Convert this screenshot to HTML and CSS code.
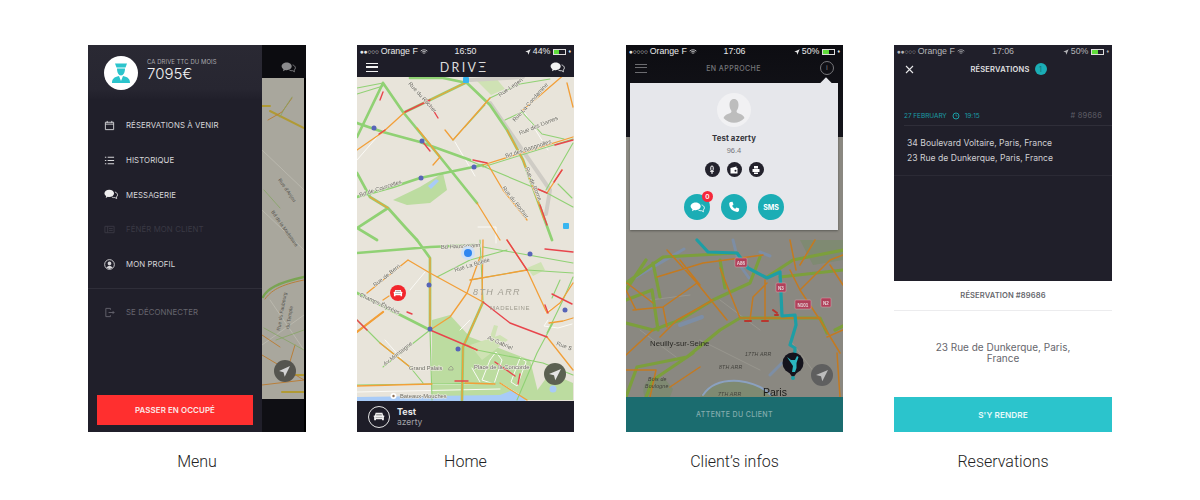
FILE: index.html
```html
<!DOCTYPE html>
<html lang="fr">
<head>
<meta charset="utf-8">
<title>Drive – screens</title>
<link rel="stylesheet" href="styles.css">
</head>
<body>
<svg class="defs" width="0" height="0">
  <defs>
    <symbol id="chat" viewBox="0 0 16 12"><path d="M6 .5c3 0 5.500 1.800 5.500 4.200S9 8.900 6 8.900c-.6 0-1.100 0-1.600-.2L2 10l.5-2.200C1.200 7 .5 5.900.5 4.700.5 2.300 3 .5 6 .5z" fill="currentColor"/><path d="M12.500 3.200c1.800.5 3 1.700 3 3.200 0 1-.5 1.800-1.300 2.400l.3 1.900-2-1.200c-1.200.2-2.500 0-3.500-.6" fill="none" stroke="currentColor" stroke-width=".9"/></symbol>
    <symbol id="loc" viewBox="0 0 10 10"><path d="M9.500.5 5.500 9.500 4.500 5.500.5 4.500z" fill="currentColor"/></symbol>
    <symbol id="car" viewBox="0 0 16 12"><path d="M3.500 1h9l1 3.500h1.500v2h-.5V11h-2.500V9.500h-8V11H1.500V6.500H1v-2h1.500z" fill="currentColor"/><path d="M4.500 2.500h7l.5 2H4zM3.500 6.500h9v1h-9z" fill="#00000055"/></symbol>
  </defs>
</svg>
<main class="board">

  <figure class="shot">
    <div class="phone phone-menu">
      <nav class="drawer">
        <header class="drawer-head">
          <svg class="avatar" viewBox="0 0 34 34"><circle cx="17" cy="17" r="17" fill="#fff"/><path d="M11 7.500h12l-1.500 4h-9zM13 12.500h8c0 4-1.500 7-4 7s-4-3-4-7zM8 27c0-4 2-6 7-7l2 5 2-5c5 1 7 3 7 7z" fill="#2bc4cc"/></svg>
          <div class="earn">
            <span class="earn-label">CA DRIVE TTC DU MOIS</span>
            <strong class="earn-value">7095€</strong>
          </div>
        </header>
        <ul class="menu">
          <li class="menu-item"><svg class="mi" viewBox="0 0 12 12"><path d="M1.500 2.500h9v8h-9zM1.500 4.500h9M3.500 1v2M8.500 1v2" fill="none" stroke="currentColor"/></svg>RÉSERVATIONS À VENIR</li>
          <li class="menu-item"><svg class="mi" viewBox="0 0 12 12"><path d="M1 2.500h1.500M4 2.500h7M1 6h1.500M4 6h7M1 9.500h1.500M4 9.500h7" fill="none" stroke="currentColor" stroke-width="1.200"/></svg>HISTORIQUE</li>
          <li class="menu-item"><svg class="mi mi-chat"><use href="#chat"/></svg>MESSAGERIE</li>
          <li class="menu-item is-off"><svg class="mi" viewBox="0 0 12 12"><path d="M1 2.500h10v7H1zM4 2.500v7M5.500 5h4M5.500 7h4" fill="none" stroke="currentColor"/></svg>FÉNÉR MON CLIENT</li>
          <li class="menu-item"><svg class="mi" viewBox="0 0 12 12"><circle cx="6" cy="6" r="5.300" fill="none" stroke="currentColor"/><path d="M6 2.800c1.200 0 2 .9 2 2.200S7.200 7 6 7 4 6.300 4 5s.8-2.200 2-2.200zM2.800 9.500C3.200 8.200 4.500 7.600 6 7.600s2.800.6 3.200 1.900L6 11z" fill="currentColor"/></svg>MON PROFIL</li>
        </ul>
        <div class="menu-sep"></div>
        <div class="menu-item is-dim"><svg class="mi" viewBox="0 0 12 12"><path d="M7 3V1.500H2v9h5V9M5 6h6M9.500 4.500 11 6 9.500 7.500" fill="none" stroke="currentColor"/></svg>SE DÉCONNECTER</div>
        <button class="busy-btn">PASSER EN OCCUPÉ</button>
      </nav>
      <div class="peek">
        <div class="peek-top"><svg class="peek-chat"><use href="#chat"/></svg></div>
        <svg class="peek-map" viewBox="262 78 42 321" width="42" height="321">
          <rect x="262" y="78" width="42" height="321" fill="#a9a79d"/>
          <g class="rd-thin-w">
            <path d="M262 150 304 190M262 210l42 40M270 300l34 50M262 345l42-30"/>
          </g>
          <path class="dk-y" d="M270 111l34 17M262 106h8M286 375h18M282 392h22"/>
          <path class="dk-o" d="M268 120l14-8 10-14M262 355l42 25M262 335l18 12M262 385l42-5M295 345l-6 20"/>
          <path class="dk-gt" d="M280 117c4-8 8-14 12-20M264 190l16 18M264 328l40 22M276 340l28-10"/>
          <path class="dk-g" d="M263 297c4-8 14-14 41-20"/>
          <path class="dk-o" d="M265 299c6-8 14-14 39-19"/>
          <g class="lbl-dk">
            <text x="278" y="180" transform="rotate(55 278 180)">Rue d'Anjou</text>
            <text x="271" y="212" transform="rotate(55 271 212)">Bd de la Madeleine</text>
            <text x="280" y="331" transform="rotate(-80 280 331)">Rue du Faubourg</text>
            <text x="289" y="329" transform="rotate(-80 289 329)">du Temple</text>
          </g>
          <circle cx="285" cy="371" r="11" fill="#55554f"/>
          <path d="M290 366l-11 5 4.500 1.200 1.200 4.500z" fill="#d4d4d4"/>
        </svg>
        <div class="peek-bottom"></div>
      </div>
    </div>
    <figcaption class="caption">Menu</figcaption>
  </figure>

  <figure class="shot">
    <div class="phone phone-home">
      <header class="topbar">
        <div class="status">
          <span class="st-left"><i class="dots">●●○○○</i> Orange F <svg class="wifi" viewBox="0 0 10 8"><path d="M.5 2.800a6.500 6.500 0 0 1 9 0M2 4.300a4.300 4.300 0 0 1 6 0M3.500 5.800a2.200 2.200 0 0 1 3 0" fill="none" stroke="currentColor"/></svg></span>
          <span class="st-mid">16:50</span>
          <span class="st-right"><svg class="st-arrow"><use href="#loc"/></svg> 44% <span class="batt"><span class="batt-fill batt-44"></span></span><i class="bolt">♦</i></span>
        </div>
        <div class="nav">
          <span class="burger"></span>
          <span class="logo">DRIVΞ</span>
          <svg class="nav-chat"><use href="#chat"/></svg>
        </div>
      </header>
      <svg class="map map-soft" viewBox="357 77 217 324" width="217" height="324">
        <rect x="357" y="77" width="217" height="324" fill="#e8e4da"/>
        <path class="park" d="M393 200l27-13 23-14 4 17-17 13-23 2z"/>
        <path class="park" d="M432 320l18-5 20 22 60 23 10 40H432z"/>
        <path class="park" d="M530 400l20-27 23 10v17z"/>
        <path class="park2" d="M475 79l20-2 10 12-14 6zM470 345l30-10 8 5-26 20zM527 268l14-6 4 8-12 6zM489 340l5-15 4 1-4 14z"/>
        <path class="rail" d="M470 80l53-3M490 103l60 87 -4 24"/>
        <path class="water" d="M357 397l143-2 13-5 12 10 1 1H357z"/>
        <path class="water" d="M428 186l8-7 3 2-8 8z"/>
        <circle class="water" cx="553" cy="389" r="3.500"/>
        <g class="wh">
          <path d="M383 130l-26 30M455 142l20 34M478 227h18v16M523 110l25 40M410 290l15-18M385 340l16 18M460 330l10-10M472 368l8 14M490 360l-8 20 12 4 8-24-6-8 -6 8M520 358l-9 24 6 4 9-24zM548 320l-4 6 14 2 14-4M545 312l14-7M357 386l143-3 20 12M357 392l143-3"/>
        </g>
        <g class="gt">
          <path d="M357 88l26-5M357 94l26-8M453 140l37-42 30-14 30-5M465 127l20-22M505 120l17-8 20 22 22 5M546 190l27-47M547 193l26 14M483 167l90-28M468 160l79 33M572 198l-14-14"/>
          <path d="M437 277l33-17 37-10M470 280l57-10 46 3M480 240l3 60M483 247l34 6 56 10M430 330l2 70M477 350l66 13 30 12M383 367l47-37M357 320l23 23 30 24 13 16M553 323l-16 30-20 47M573 277l-10 23-16 33M357 385l143-2"/>
          <path d="M560 280l-8 18"/>
        </g>
        <g class="g">
          <path d="M383 83l20 29 37 45 37 46M357 123l26 9 37 10 50 18M357 197l36-10 27-9 63-13M357 137l26-54M410 78h33l24 5 23 22 17 25 16 30 17 47 12 33M357 173l13 24 18 11 17 19 12 13M357 228l31-20M357 228l20 12M405 112l25-12 35-17"/>
          <path d="M357 253l73-6 45-2M417 240l13 18v72M357 293l73 37M483 302l-20 45-1 53"/>
        </g>
        <g class="o">
          <path d="M357 150l26-18 22-20 25-12 35-17M417 128l23 29-7 8M445 130l8 10 37-42M477 203l23 37M487 163l16 27 24 30M483 165l90-28M547 193l15-23M523 110l50-43M507 130l16 30 17 47 4 12M567 83l6 24M370 197l18 11"/>
          <path d="M408 260l22 13 53 29M547 337l26 33M357 332l26-20M430 330l20-13 17-24 13-36M507 240l20 30 20 43 13-10 13-20M483 302l-20 45-1 53M430 258v72M367 293l41-33M380 343l30 24M357 386l75-2M483 240l-1 60M470 280l57-10M477 350l-10-5"/>
          <path class="o-thick" d="M357 332l26-20"/>
          <path d="M549 323l14-2 10-3M383 300l6-4M465 383l30 1M500 383l27 17"/>
        </g>
        <g class="r">
          <path d="M405 112l25-12M427 100l11 18M430 151l-8-10M385 130l-6 4M383 92l-3 8M473 160l14 3M533 187l14 6M540 205l7 20M562 170l-8 12M555 145l18-5"/>
          <path d="M483 302l27 21 37 14M430 330l47 20M507 240l20 30M545 305l3 8M357 320l10 10M455 381l13 0M495 362l20 14M518 384l2-10M545 249l28 3M407 312l5 2M572 304l-20-10"/>
        </g>
        <g class="lbl">
          <text x="408" y="84" transform="rotate(48 408 84)">Rue du Rocher</text>
          <text x="500" y="97" transform="rotate(-35 500 97)">Rue Legen</text>
          <text x="515" y="122" transform="rotate(-48 515 122)">Rue La Condamine</text>
          <text x="520" y="135" transform="rotate(-22 520 135)">Rue des Dames</text>
          <text x="506" y="158" transform="rotate(-18 506 158)">Bd des Batignolles</text>
          <text x="525" y="168" transform="rotate(68 525 168)">Rue de Rome</text>
          <text x="502" y="188" transform="rotate(52 502 188)">Rue du Rocher</text>
          <text x="360" y="197" transform="rotate(-18 360 197)">Bd de Courcelles</text>
          <text x="441" y="249" transform="rotate(-3 441 249)">Bd Haussmann</text>
          <text x="455" y="272" transform="rotate(-17 455 272)">Rue La Boétie</text>
          <text x="487" y="339" transform="rotate(24 487 339)">Av Gabriel</text>
          <text x="556" y="345" transform="rotate(20 556 345)">Rue S</text>
          <text x="375" y="287" transform="rotate(-38 375 287)">Rue de Berri</text>
          <text x="359" y="296" transform="rotate(25 359 296)">Champs-Élysées</text>
          <text x="385" y="366" transform="rotate(-38 385 366)">Av Montaigne</text>
          <text x="409" y="370">Grand Palais</text>
          <text x="474" y="369">Place de la Concorde</text>
          <text x="400" y="398">Bateaux-Mouches</text>
        </g>
        <path d="M449 368l2-2 2 2v2h-4z" fill="none" stroke="#8a8880" stroke-width=".6"/>
        <text class="lbl-area" x="473" y="295">8TH ARR</text>
        <text class="lbl-area2" x="490" y="310">MADELEINE</text>
        <circle cx="393.500" cy="396" r="3" fill="#fff"/><circle cx="393.500" cy="396" r="1.200" fill="#8d6e52"/>
        <g class="metro">
          <circle cx="374" cy="128" r="2.500"/><circle cx="422" cy="141" r="2.500"/><circle cx="474" cy="167" r="2.500"/><circle cx="421" cy="178" r="2.500"/>
          <circle cx="429" cy="285" r="2.500"/><circle cx="430" cy="329" r="2.500"/><circle cx="458" cy="349" r="2.500"/><circle cx="530" cy="254" r="2.500"/><circle cx="565" cy="310" r="2.500"/>
        </g>
        <rect x="463" y="77" width="6" height="6" rx="1" fill="#39b6f0"/>
        <rect x="563" y="223" width="6" height="6" rx="1" fill="#39b6f0"/>
        <circle cx="468" cy="253" r="7" fill="#cfe0f5"/>
        <circle cx="468" cy="253" r="4" fill="#2f86f0"/>
        <circle cx="398" cy="293" r="8" fill="#f2262c"/>
        <use href="#car" x="393" y="289" width="10" height="8" color="#fff"/>
        <circle cx="555" cy="374" r="11" fill="#5c6152"/>
        <path d="M561 369l-12 5 5 1.300 1.300 5z" fill="#e5e5e5"/>
      </svg>
      <footer class="driver-bar">
        <span class="car-ring"><svg class="car-ic"><use href="#car"/></svg></span>
        <div class="driver-txt">
          <strong class="driver-name">Test</strong>
          <span class="driver-sub">azerty</span>
        </div>
      </footer>
    </div>
    <figcaption class="caption">Home</figcaption>
  </figure>

  <figure class="shot shot-client">
    <div class="phone phone-client">
      <header class="topbar topbar-tall">
        <div class="status">
          <span class="st-left"><i class="dots">●○○○○</i> Orange F <svg class="wifi" viewBox="0 0 10 8"><path d="M.5 2.800a6.500 6.500 0 0 1 9 0M2 4.300a4.300 4.300 0 0 1 6 0M3.500 5.800a2.200 2.200 0 0 1 3 0" fill="none" stroke="currentColor"/></svg></span>
          <span class="st-mid">17:06</span>
          <span class="st-right"><svg class="st-arrow"><use href="#loc"/></svg> 50% <span class="batt"><span class="batt-fill batt-50"></span></span><i class="bolt">♦</i></span>
        </div>
        <div class="nav nav-dim">
          <span class="burger burger-dim"></span>
          <span class="nav-title">EN APPROCHE</span>
          <span class="info-ring">i</span>
        </div>
      </header>
      <svg class="map map-soft" viewBox="626 137 217 260" width="217" height="260">
        <rect x="626" y="137" width="217" height="260" fill="#8a8881"/>
        <path d="M645 397c-4-8 0-16 8-20l12 2 8 10-3 8zM700 397c6-12 20-17 40-16 14 1 24 8 34 16z" fill="#7f8a72"/>
        <path d="M800 240h43v20l-30 5z" fill="#7f8a72"/>
        <path d="M626 283c20-12 34-20 58-34M733 240l6 24 10 14M760 252l10 4M770 375l12-12" fill="none" stroke="#7d8ea5" stroke-width="3"/>
        <path d="M703 395c8-12 22-15 36-14 16 2 26 8 32 14" fill="none" stroke="#8ba1c0" stroke-width="2"/>
        <path d="M680 325l22-8" fill="none" stroke="#7d8ea5" stroke-width="4"/>
        <g class="wh-dk"><path d="M640 330l40 30M700 340l60 30M720 300l40 30M790 340l30 40M650 300l40-5"/></g>
        <g class="dk-g2">
          <path d="M626 283l37-26 74-4M780 277l63-7M843 250l-50 10-26 17M626 397l11-30 50-10 33-27 20-12h80l7 15M693 353l-40 27-7 17M653 263l7 34M720 260l5 28M626 323l27 7 27-10 33-20 37-17 10-26M626 290l20-30M835 330l8-4"/>
          <path d="M626 300l26-10 6 40"/>
        </g>
        <g class="dk-o2">
          <path d="M727 320l-30-37-30-33M657 277l46-14 60-8M765 280v40M750 320l3-23 14-14M820 320l-20-30-10-20M837 353l3 44M820 320l20 33M827 337l16-7M633 310l30-3 4 20M626 290l10 20M697 283l-34 24M626 355l27-25M660 337l17-17 36-20M740 318l-20-50M800 290l30-30 13-5M843 285l-13-20M627 283l26 20M626 370h30l-6 27M700 367l-30 20M790 240l6 30M815 240l-15 25M680 260l20 25M740 318h80"/>
        </g>
        <path class="dk-r2" d="M745 321h6M762 321h6M773 310l4 3M775 315h3"/>
        <path class="route" d="M697 240l11 12 29 1 11 15 19 10 13-6 2 44 13-1 1 10-6 20 5 3-1 22"/>
        <g class="sign">
          <rect x="735" y="258" width="12" height="9" rx="1"/><rect x="776" y="283" width="10" height="9" rx="1"/><rect x="795" y="300" width="16" height="9" rx="1"/><rect x="821" y="298" width="10" height="9" rx="1"/>
        </g>
        <g class="sign-t">
          <text x="741" y="265">A86</text><text x="781" y="290">N3</text><text x="803" y="307">N101</text><text x="826" y="305">N2</text>
        </g>
        <text class="lbl-city" x="650" y="346">Neuilly-sur-Seine</text>
        <text class="lbl-paris" x="763" y="396">Paris</text>
        <text class="lbl-ar" x="745" y="356">17TH ARR</text>
        <text class="lbl-ar" x="719" y="369">8TH ARR</text>
        <text class="lbl-ar" x="718" y="396">7TH ARR</text>
        <text class="lbl-ar" x="648" y="381">Bois de</text>
        <text class="lbl-ar" x="645" y="388">Boulogne</text>
        <path d="M793 378l-5-7h10z" fill="#14131c"/>
        <circle cx="793" cy="363" r="10.500" fill="#14131c"/>
        <path d="M787 357l4 3h4l2-4 1.500 1-2 6v5l-1.500 4h-3l1-6-2-3z" fill="#2bb6bf"/>
        <circle cx="793" cy="378" r="2" fill="#1e9ea5"/>
        <circle cx="822" cy="375" r="11" fill="#5f5f5f"/>
        <path d="M828 370l-12 5 5 1.300 1.300 5z" fill="#bdbdbd"/>
      </svg>
      <footer class="wait-bar">ATTENTE DU CLIENT</footer>
      <section class="popup">
        <span class="nub"></span>
        <svg class="client-pic" viewBox="0 0 34 34"><circle cx="17" cy="17" r="17" fill="#f1f1f3"/><path d="M17 6c3 0 4.500 2.500 4.500 6 0 2.500-1 4.500-2 6 0 1.500 1 2 3 2.800 3 1.200 4 2 5 4.200a14 14 0 0 1-21 0c1-2.200 2-3 5-4.200 2-.8 3-1.300 3-2.800-1-1.500-2-3.500-2-6 0-3.500 1.500-6 4.500-6z" fill="#bdbdbd"/></svg>
        <strong class="client-name">Test azerty</strong>
        <span class="client-score">96.4</span>
        <div class="badges">
          <span class="mini"><svg viewBox="0 0 10 10"><path d="M5 1a1.200 1.200 0 0 1 1.200 1.200v2.500a1.200 1.200 0 0 1-2.400 0V2.200A1.200 1.200 0 0 1 5 1zM3 6c.6 1 3.400 1 4 0M5 6.500V9" fill="none" stroke="#fff"/></svg></span>
          <span class="mini"><svg viewBox="0 0 10 10"><path d="M1.500 3l6-1.500V3h1v5.500h-7z" fill="#fff"/><circle cx="6.500" cy="5.800" r="1" fill="#23222c"/></svg></span>
          <span class="mini"><svg viewBox="0 0 10 10"><path d="M3 1h4v2.500H3zM1.500 4h7v3h-7zM3 7.500h4V9H3z" fill="#fff"/></svg></span>
        </div>
        <div class="actions">
          <span class="act"><svg class="act-chat"><use href="#chat"/></svg><b class="act-badge">0</b></span>
          <span class="act"><svg class="act-ic" viewBox="0 0 12 12"><path d="M2.500 1 4.500.8 5.500 3.500 4.200 4.800c.5 1.300 1.600 2.400 3 3l1.300-1.300 2.700 1-.2 2.100c-.2.800-1 1.400-1.800 1.300C4.500 10.500 1.500 7.500 1.200 2.800 1.200 2 1.700 1.200 2.500 1z" fill="#fff"/></svg></span>
          <span class="act act-sms">SMS</span>
        </div>
      </section>
    </div>
    <figcaption class="caption">Client’s infos</figcaption>
  </figure>

  <figure class="shot">
    <div class="phone phone-resa">
      <section class="resa-dark">
        <div class="status status-dim">
          <span class="st-left"><i class="dots">●●○○○</i> Orange F <svg class="wifi" viewBox="0 0 10 8"><path d="M.5 2.800a6.500 6.500 0 0 1 9 0M2 4.300a4.300 4.300 0 0 1 6 0M3.500 5.800a2.200 2.200 0 0 1 3 0" fill="none" stroke="currentColor"/></svg></span>
          <span class="st-mid">17:06</span>
          <span class="st-right"><svg class="st-arrow"><use href="#loc"/></svg> 50% <span class="batt"><span class="batt-fill batt-50"></span></span><i class="bolt">♦</i></span>
        </div>
        <div class="resa-nav">
          <svg class="close" viewBox="0 0 9 9"><path d="M1 1l7 7M8 1 1 8" fill="none" stroke="#e8e8ea" stroke-width="1.100"/></svg>
          <span class="resa-title">RÉSERVATIONS</span>
          <span class="resa-count">1</span>
        </div>
        <div class="resa-meta">
          <span class="resa-date">27 FEBRUARY <svg class="clock" viewBox="0 0 8 8"><circle cx="4" cy="4" r="3" fill="none" stroke="currentColor"/><path d="M4 2.300V4h1.500" fill="none" stroke="currentColor" stroke-width=".7"/></svg> 19:15</span>
          <span class="resa-id"># 89686</span>
        </div>
        <div class="resa-addr">
          <p class="addr-line">34 Boulevard Voltaire, Paris, France</p>
          <p class="addr-line">23 Rue de Dunkerque, Paris, France</p>
        </div>
      </section>
      <section class="resa-light">
        <h2 class="resa-sub">RÉSERVATION #89686</h2>
        <p class="resa-dest">23 Rue de Dunkerque, Paris, France</p>
        <button class="go-btn">S'Y RENDRE</button>
      </section>
    </div>
    <figcaption class="caption">Reservations</figcaption>
  </figure>

</main>
</body>
</html>
```

FILE: styles.css
```css
* { box-sizing: border-box; }
html, body { margin: 0; padding: 0; background: #fff; }
body { font-family: "Inter", "Liberation Sans", sans-serif; overflow: hidden; }
.defs { position: absolute; }

.board { display: flex; gap: 51px; padding: 45px 0 0 88px; }
.shot { margin: 0; width: 218px; flex: none; }
.shot:nth-child(2), .shot:nth-child(3) { width: 217px; }
.shot-client { margin-left: 1px; }
.phone { position: relative; height: 387px; overflow: hidden; display: flex; }
.caption { margin-top: 20px; font: 300 16px/20px "Roboto", "Liberation Sans", sans-serif; color: #222; text-align: center; }

/* status bar + nav */
.phone-home, .phone-client, .phone-resa { flex-direction: column; }
.topbar { background: #1e1d28; height: 32px; flex: none; }
.topbar-tall { height: 92px; }
.status { display: grid; grid-template-columns: 1fr auto 1fr; align-items: center; height: 13px; padding: 0 3px; font: 8.800px/13px "Liberation Sans", sans-serif; color: #e9e9ea; }
.status-dim { color: #b5b5b9; }
.st-left, .st-right { display: flex; align-items: center; gap: 2px; white-space: nowrap; }
.st-right { justify-content: flex-end; }
.st-mid { font-weight: 400; }
.dots { font-style: normal; font-size: 6.500px; letter-spacing: -.2px; }
.wifi { width: 8px; height: 6px; }
.st-arrow { width: 6px; height: 6px; color: currentColor; }
.batt { display: inline-block; width: 13px; height: 6px; border: 1px solid #ddd; margin-left: 1px; }
.batt-fill { display: block; height: 100%; background: #5fdc3a; }
.batt-44 { width: 44%; }
.batt-50 { width: 55%; }
.bolt { font-style: normal; font-size: 5px; }

.nav { position: relative; display: flex; align-items: center; justify-content: space-between; height: 19px; padding: 0 9px; color: #fff; }
.burger { width: 12px; height: 9px; border-top: 1.500px solid #f1f1f1; border-bottom: 1.500px solid #f1f1f1; position: relative; }
.burger::after { content: ""; position: absolute; left: 0; right: 0; top: 2.300px; height: 1.500px; background: #f1f1f1; }
.burger-dim { border-color: #6c6c70; }
.burger-dim::after { background: #6c6c70; }
.logo { font: 400 12.500px/19px "Lato", sans-serif; letter-spacing: 2.300px; color: #dcdcdc; }
.nav-chat { width: 15px; height: 11px; color: #f2f2f2; }
.nav-dim { height: 20px; padding: 0 9px; }
.nav-title { font-size: 7px; font-weight: 500; letter-spacing: .45px; color: #77777b; }
.info-ring { display: grid; place-items: center; width: 14px; height: 14px; border: 1px solid #77777b; border-radius: 50%; font: 8px/1 "Liberation Sans", sans-serif; color: #77777b; }

.map { display: block; flex: none; }
.map-soft { filter: blur(.3px); }
.map text { font-family: "Liberation Sans", sans-serif; }
.map path, .peek-map path { stroke-linecap: round; stroke-linejoin: round; }
.park { fill: #bcdca0; }
.park2 { fill: #cfe2b4; }
.rail { fill: none; stroke: #cfccc5; stroke-width: 4; }
.water { fill: #a8cbf7; }
.wh path { fill: none; stroke: #fbfaf6; stroke-width: 1; }
.wh-dk path { fill: none; stroke: #98968e; stroke-width: 1; }
.g path { fill: none; stroke: #90d174; stroke-width: 2.700; }
.gt path { fill: none; stroke: #90d174; stroke-width: 1.100; }
.o path { fill: none; stroke: #f29f38; stroke-width: 1.300; }
.o .o-thick { stroke-width: 2.200; }
.r path { fill: none; stroke: #e8454c; stroke-width: 1.400; }
.lbl text { font-size: 5.800px; fill: #6b6a62; paint-order: stroke; stroke: #efece4; stroke-width: 1.100px; }
.lbl-area { font-size: 9px; font-style: italic; letter-spacing: 1.400px; fill: #a29f94; }
.lbl-area2 { font-size: 6px; letter-spacing: .6px; fill: #9d9a8e; }
.metro circle { fill: #5764b8; }

/* menu */
.drawer { width: 174px; background: #201f2a; display: flex; flex-direction: column; flex: none; }
.drawer-head { display: flex; align-items: center; gap: 9px; height: 55px; padding-left: 16px; background: linear-gradient(#2a2933, #272631 80%, #201f2a); }
.avatar { width: 34px; height: 34px; flex: none; }
.earn { display: flex; flex-direction: column; margin-top: -5px; }
.earn-label { font-size: 5.900px; line-height: 8px; color: #a9a9ae; letter-spacing: .1px; }
.earn-value { font-size: 15px; line-height: 16px; font-weight: 300; color: #f2f2f3; }
.menu { list-style: none; margin: 8px 0 0; padding: 0; }
.menu-item { display: flex; align-items: center; height: 34.700px; padding-left: 16px; font-size: 7.800px; font-weight: 400; letter-spacing: .1px; color: #d6d6d9; white-space: nowrap; }
.mi { width: 11px; height: 11px; margin-right: 11px; flex: none; }
.mi-chat { width: 14px; margin-right: 8px; color: #eee; }
.is-off { color: #3a3944; }
.is-dim { color: #66656e; height: 30px; margin-top: 8px; }
.menu-sep { height: 1px; margin-top: 7px; background: #2f2e39; }
.busy-btn { margin: auto 9px 7px; height: 30px; border: 0; background: #ff2f2f; color: #fbe7e7; font: 600 7.900px "Inter", sans-serif; letter-spacing: .1px; }
.peek { width: 44px; flex: none; display: flex; flex-direction: column; background: #000; box-shadow: inset 4px 0 4px -3px #0006; }
.peek-top { height: 33px; background: #0c0c10; padding: 17px 0 0 19px; }
.peek-chat { display: block; width: 15px; height: 11px; color: #8b8b8d; }
.peek-map { display: block; flex: none; }
.peek-bottom { flex: 1; margin-right: 2px; background: #0f0f14; }
.rd-thin-w path { fill: none; stroke: #bab8ae; stroke-width: 1; }
.dk-y { fill: none; stroke: #b09a35; stroke-width: 2; }
.dk-o { fill: none; stroke: #b97f3a; stroke-width: 1; }
.dk-g { fill: none; stroke: #7aa453; stroke-width: 2.500; }
.dk-gt { fill: none; stroke: #85a565; stroke-width: .8; }
.lbl-dk text { font: 5px "Liberation Sans", sans-serif; fill: #54534d; }

/* home footer */
.driver-bar { flex: 1; display: flex; align-items: center; gap: 7px; padding-left: 11px; background: #1e1d28; }
.car-ring { display: grid; place-items: center; width: 22px; height: 22px; border: 1px solid #e5e5e5; border-radius: 50%; flex: none; }
.car-ic { width: 12px; height: 9px; color: #f0f0f0; }
.driver-txt { display: flex; flex-direction: column; }
.driver-name { font-size: 9px; line-height: 10px; color: #e9e9ea; }
.driver-sub { font-size: 8.500px; line-height: 10px; color: #a3a3a8; }

/* client */
.phone-client .topbar-tall { background: linear-gradient(#0d0d12, #15151b); }
.wait-bar { flex: 1; display: grid; place-items: center; background: #1b6c6f; color: #84adae; font-size: 7px; font-weight: 500; letter-spacing: .35px; }
.popup { position: absolute; left: 4px; top: 38px; width: 208px; height: 147px; display: flex; flex-direction: column; align-items: center; padding-top: 10px; background: #e6e7eb; box-shadow: 0 1px 2px #0005; }
.nub { position: absolute; right: 8px; top: -4px; width: 8px; height: 8px; background: #e6e7eb; transform: rotate(45deg); }
.client-pic { width: 34px; height: 34px; flex: none; }
.client-name { margin-top: 6px; font-size: 7.800px; line-height: 11px; font-weight: 700; color: #35353a; letter-spacing: .1px; }
.client-score { margin-top: 2px; font: 7.500px/10px "Liberation Sans", sans-serif; color: #77777c; }
.badges { display: flex; gap: 7px; margin-top: 6px; }
.mini { display: grid; place-items: center; width: 15px; height: 15px; border-radius: 50%; background: #23222c; }
.mini svg { width: 10px; height: 10px; }
.actions { display: flex; gap: 11px; margin-top: 17px; }
.act { position: relative; display: grid; place-items: center; width: 26px; height: 26px; border-radius: 50%; background: #1badb5; color: #fff; }
.act-chat { width: 15px; height: 11px; }
.act-ic { width: 12px; height: 12px; }
.act-sms { font-size: 7px; font-weight: 700; }
.act-badge { position: absolute; right: -3px; top: -3px; display: grid; place-items: center; width: 11px; height: 11px; border-radius: 50%; background: #f5283a; color: #fff; font-size: 6.500px; font-weight: 600; }
.route { fill: none; stroke: #1e9ea5; stroke-width: 3.200; }
.dk-g2 path { fill: none; stroke: #7c9f3c; stroke-width: 3.200; }
.dk-o2 path { fill: none; stroke: #c47a20; stroke-width: 1.500; }
.dk-r2 { fill: none; stroke: #b8362e; stroke-width: 2; }
.sign rect { fill: #b0405a; stroke: #d8a0ac; stroke-width: .5; }
.sign-t text { font-size: 4.500px; font-weight: 700; fill: #e6d6da; text-anchor: middle; }
.map .lbl-city { font-size: 7.800px; fill: #2b2a26; }
.map .lbl-paris { font-size: 10.500px; fill: #1b1a18; }
.map .lbl-ar { font-size: 5.200px; font-style: italic; fill: #42413c; letter-spacing: .2px; }

/* reservations */
.resa-dark { height: 236px; flex: none; background: #201f2a; }
.resa-nav { position: relative; display: flex; align-items: center; justify-content: center; gap: 5px; height: 22px; padding-left: 11px; }
.close { position: absolute; left: 11px; top: 7px; width: 9px; height: 9px; }
.resa-title { font-size: 7.500px; font-weight: 600; letter-spacing: .2px; color: #e1e1e3; }
.resa-count { display: grid; place-items: center; width: 12px; height: 12px; border-radius: 50%; background: #1badb5; color: #0f6e74; font-size: 7px; }
.resa-meta { display: flex; justify-content: space-between; align-items: center; height: 15px; margin: 28px 0 0 10px; padding-right: 10px; }
.resa-date { display: flex; align-items: center; gap: 3px; font-size: 6.500px; letter-spacing: -.05px; color: #1b9ea6; }
.clock { width: 8px; height: 8px; margin: 0 2px; }
.resa-id { font-size: 7.500px; color: #5e5d66; letter-spacing: .2px; }
.resa-addr { margin: 2px 0 0; padding: 11px 0 9px 13px; border-bottom: 1px solid #2b2a35; position: relative; font-size: 8.600px; line-height: 15px; color: #cfcfd2; }
.resa-addr::before { content: ""; position: absolute; left: 10px; right: 0; top: 0; height: 1px; background: #2f2e39; }
.addr-line { margin: 0; white-space: nowrap; }
.resa-light { flex: 1; display: flex; flex-direction: column; background: #fff; }
.resa-sub { height: 30px; margin: 0; font-size: 7.600px; line-height: 30px; font-weight: 600; letter-spacing: .1px; text-align: center; color: #68686d; border-bottom: 1px solid #ececee; }
.resa-dest { flex: 1; display: flex; align-items: center; justify-content: center; margin: 0; padding: 0 38px 3px; font-size: 10px; line-height: 10.500px; text-align: center; color: #66666c; }
.go-btn { height: 35px; flex: none; border: 0; background: #2bc4cc; color: #e9fafb; font: 600 8.200px "Inter", sans-serif; letter-spacing: .1px; }
```
